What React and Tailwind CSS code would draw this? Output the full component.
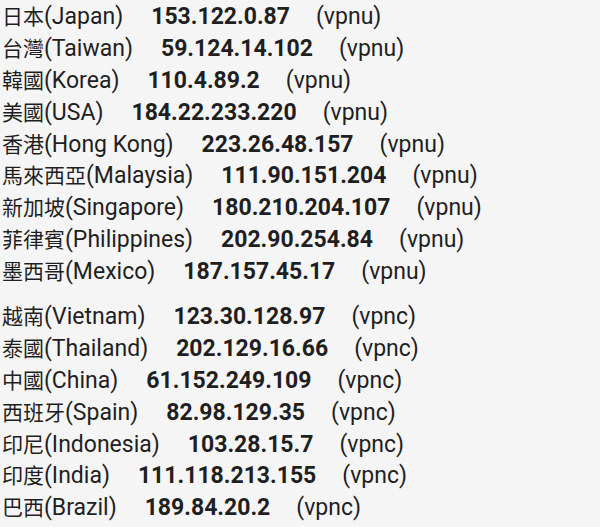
const groupA = [
  ["日本", "(Japan)", "153.122.0.87", "(vpnu)"],
  ["台灣", "(Taiwan)", "59.124.14.102", "(vpnu)"],
  ["韓國", "(Korea)", "110.4.89.2", "(vpnu)"],
  ["美國", "(USA)", "184.22.233.220", "(vpnu)"],
  ["香港", "(Hong Kong)", "223.26.48.157", "(vpnu)"],
  ["馬來西亞", "(Malaysia)", "111.90.151.204", "(vpnu)"],
  ["新加坡", "(Singapore)", "180.210.204.107", "(vpnu)"],
  ["菲律賓", "(Philippines)", "202.90.254.84", "(vpnu)"],
  ["墨西哥", "(Mexico)", "187.157.45.17", "(vpnu)"],
];
const groupB = [
  ["越南", "(Vietnam)", "123.30.128.97", "(vpnc)"],
  ["泰國", "(Thailand)", "202.129.16.66", "(vpnc)"],
  ["中國", "(China)", "61.152.249.109", "(vpnc)"],
  ["西班牙", "(Spain)", "82.98.129.35", "(vpnc)"],
  ["印尼", "(Indonesia)", "103.28.15.7", "(vpnc)"],
  ["印度", "(India)", "111.118.213.155", "(vpnc)"],
  ["巴西", "(Brazil)", "189.84.20.2", "(vpnc)"],
];

function Row({ r }) {
  return (
    <div className="flex items-baseline whitespace-nowrap h-[31.9px]">
      <span className="text-[21px]">{r[0]}</span>
      <span>{r[1]}</span>
      <span className="ml-[28px] font-bold">{r[2]}</span>
      <span className="ml-[26px]">{r[3]}</span>
    </div>
  );
}

export default function App() {
  return (
    <div
      className="w-[600px] h-[527px] bg-[#f5f5f5] text-[#1f1f1f] text-[23px] leading-[31.9px] pl-[2px] pt-[1px] overflow-hidden"
      style={{ fontFamily: "Roboto, 'Noto Sans CJK TC', sans-serif" }}
    >
      {groupA.map((r, i) => (
        <Row key={i} r={r} />
      ))}
      <div className="h-[13px]" />
      {groupB.map((r, i) => (
        <Row key={i} r={r} />
      ))}
    </div>
  );
}
